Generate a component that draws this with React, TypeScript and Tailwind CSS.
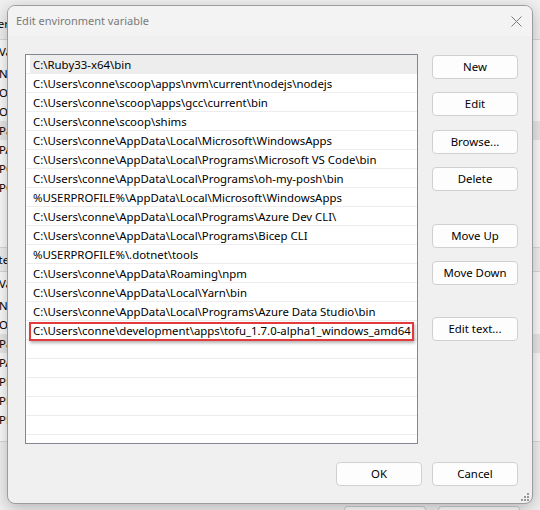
const paths = [
  'C:\\Ruby33-x64\\bin',
  'C:\\Users\\conne\\scoop\\apps\\nvm\\current\\nodejs\\nodejs',
  'C:\\Users\\conne\\scoop\\apps\\gcc\\current\\bin',
  'C:\\Users\\conne\\scoop\\shims',
  'C:\\Users\\conne\\AppData\\Local\\Microsoft\\WindowsApps',
  'C:\\Users\\conne\\AppData\\Local\\Programs\\Microsoft VS Code\\bin',
  'C:\\Users\\conne\\AppData\\Local\\Programs\\oh-my-posh\\bin',
  '%USERPROFILE%\\AppData\\Local\\Microsoft\\WindowsApps',
  'C:\\Users\\conne\\AppData\\Local\\Programs\\Azure Dev CLI\\',
  'C:\\Users\\conne\\AppData\\Local\\Programs\\Bicep CLI',
  '%USERPROFILE%\\.dotnet\\tools',
  'C:\\Users\\conne\\AppData\\Roaming\\npm',
  'C:\\Users\\conne\\AppData\\Local\\Yarn\\bin',
  'C:\\Users\\conne\\AppData\\Local\\Programs\\Azure Data Studio\\bin',
  'C:\\Users\\conne\\development\\apps\\tofu_1.7.0-alpha1_windows_amd64',
]

const userVars = ['NVM_HOME', 'OneDrive', 'OneDriveConsumer', 'Path', 'PATHEXT', 'POSH_INSTALLER', 'POSH_THEMES_PATH']
const sysVars = ['NUMBER_OF_PROCESSORS', 'OS', 'Path', 'PATHEXT', 'PROCESSOR_ARCHITECTURE', 'PROCESSOR_IDENTIFIER', 'PROCESSOR_LEVEL']

function WinButton({ label }: { label: string }) {
  return (
    <button className="w-[86px] h-[24px] rounded-[4px] border border-[#d0d0d0] bg-[#fdfdfd] text-[11.4px] text-black leading-none">
      {label}
    </button>
  )
}

function Grip() {
  return (
    <svg width="8" height="8" viewBox="0 0 8 8" className="absolute right-[3px] bottom-[2px]">
      {[
        [6, 0],
        [3, 3],
        [6, 3],
        [0, 6],
        [3, 6],
        [6, 6],
      ].map(([x, y]) => (
        <rect key={`${x}-${y}`} x={x} y={y} width="2" height="2" fill="#9a9a9a" />
      ))}
    </svg>
  )
}

export default function App() {
  return (
    <div className="relative w-[540px] h-[510px] overflow-hidden bg-[#f0f0f0] font-['Noto_Sans',sans-serif] text-[11.4px] text-black">
      {/* background window (Environment Variables) */}
      <div className="flex flex-col h-full">
        <div className="h-[40px] flex items-end pb-[7px] border-b border-[#d9d9d9] ml-[-16px] whitespace-nowrap">
          User variables for conne
        </div>
        <div className="h-[208px] bg-[#fbfbfb] border-b border-[#d9d9d9]">
          <div className="h-[24px] flex items-center ml-[-1px]">Variable</div>
          {userVars.map((v, i) => (
            <div key={v} className={`h-[19px] flex items-center whitespace-nowrap ${i === 3 ? 'bg-[#e8e8e8]' : ''}`}>
              <span className="ml-[-1px]">{v}</span>
            </div>
          ))}
        </div>
        <div className="h-[24px] flex items-center border-b border-[#d9d9d9] ml-[-19px] whitespace-nowrap">
          System variables
        </div>
        <div className="h-[170px] bg-[#fbfbfb] border-b border-[#d9d9d9]">
          <div className="h-[24px] flex items-center ml-[-1px]">Variable</div>
          {sysVars.map((v, i) => (
            <div key={v} className={`h-[19px] flex items-center whitespace-nowrap ${i === 2 ? 'bg-[#e8e8e8]' : ''}`}>
              <span className="ml-[-1px]">{v}</span>
            </div>
          ))}
        </div>
        <div className="flex-1 flex justify-end items-end gap-[12px] pr-[20px]">
          <div className="w-[82px] h-[4px] rounded-t-[4px] border border-b-0 border-[#d0d0d0] bg-[#fdfdfd]" />
          <div className="w-[82px] h-[4px] rounded-t-[4px] border border-b-0 border-[#d0d0d0] bg-[#fdfdfd]" />
        </div>
      </div>

      {/* Edit environment variable dialog */}
      <div className="absolute left-[7px] top-[5px] w-[526px] h-[499px] rounded-[8px] border border-[#9c9c9c] bg-[#f0f0f0] shadow-[0_4px_16px_rgba(0,0,0,0.25)] flex flex-col overflow-hidden">
        <div className="h-[30px] shrink-0 flex items-center justify-between pl-[8px] pr-[10px] bg-[#f3f3f3]">
          <span className="text-[#7a7a7a] text-[11px]">Edit environment variable</span>
          <svg width="11" height="11" viewBox="0 0 11 11">
            <path d="M0.5 0.5 L10.5 10.5 M10.5 0.5 L0.5 10.5" stroke="#7a7a7a" strokeWidth="1" fill="none" />
          </svg>
        </div>

        <div className="flex pl-[17px] pt-[18px] gap-[14px]">
          <div className="w-[393px] h-[390px] border border-[#828790] bg-white overflow-hidden">
            {paths.map((p, i) => (
              <div key={p} className="relative h-[19px] border-b border-[#ededed] flex">
                <div className={`flex-1 flex items-center pl-[3px] pt-[1px] ml-[4px] whitespace-nowrap ${i === 0 ? 'bg-[#ededed]' : ''}`}>
                  {p}
                </div>
                {i === paths.length - 1 && (
                  <div className="absolute left-[3px] top-[1px] w-[385px] h-[19px] border-2 border-[#e53a3c] shadow-[1px_2px_3px_rgba(0,0,0,0.3)]" />
                )}
              </div>
            ))}
            {[0, 1, 2, 3, 4].map(k => (
              <div key={k} className="h-[19px] border-b border-[#ededed]" />
            ))}
          </div>

          <div className="flex flex-col pt-[1px]">
            <WinButton label="New" />
            <div className="h-[13px]" />
            <WinButton label="Edit" />
            <div className="h-[14px]" />
            <WinButton label="Browse..." />
            <div className="h-[13px]" />
            <WinButton label="Delete" />
            <div className="h-[33px]" />
            <WinButton label="Move Up" />
            <div className="h-[13px]" />
            <WinButton label="Move Down" />
            <div className="h-[32px]" />
            <WinButton label="Edit text..." />
          </div>
        </div>

        <div className="flex justify-end gap-[10px] pr-[14px] pt-[18px]">
          <WinButton label="OK" />
          <WinButton label="Cancel" />
        </div>
        <Grip />
      </div>
    </div>
  )
}
